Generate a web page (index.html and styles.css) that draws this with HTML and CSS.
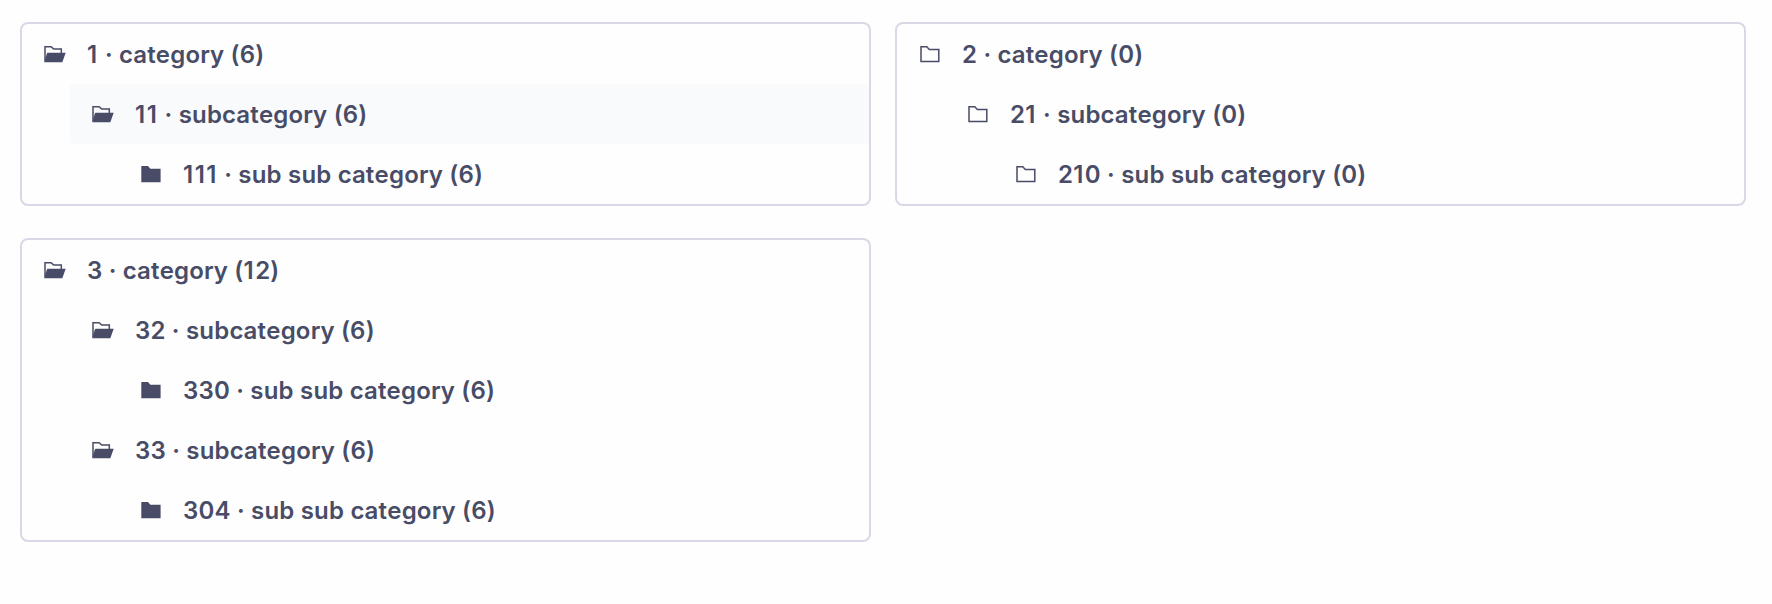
FILE: index.html
```
<!DOCTYPE html>
<html lang="en">
<head>
<meta charset="utf-8">
<title>Categories</title>
<link rel="stylesheet" href="styles.css">
</head>
<body>
<svg class="sprite" aria-hidden="true">
  <symbol id="open" viewBox="0 0 24 24">
    <path d="M3 19.5V4.7H9.1L11.7 7.1H19.3V11" fill="none" stroke="currentColor" stroke-width="1.5"/>
    <path d="M2.3 20.3L4.7 11.9Q5 10.8 6 10.8H23.7L20.3 20.3Z" fill="currentColor"/>
  </symbol>
  <symbol id="full" viewBox="0 0 24 24">
    <path d="M3.3 4H10L12.4 6.7H22.6V20.3H3.3Z" fill="currentColor"/>
  </symbol>
  <symbol id="empty" viewBox="0 0 24 24">
    <path d="M4 4.8H9.8L12.3 7.4H21.8V19.5H4Z" fill="none" stroke="currentColor" stroke-width="1.5"/>
  </symbol>
</svg>
<main class="grid">
  <section class="card">
    <div class="row"><svg class="icon"><use href="#open"/></svg><span><span class="ones">1</span> · category (6)</span></div>
    <div class="row level-2 active"><svg class="icon"><use href="#open"/></svg><span><span class="ones">11</span> · subcategory (6)</span></div>
    <div class="row level-3"><svg class="icon"><use href="#full"/></svg><span><span class="ones">111</span> · sub sub category (6)</span></div>
  </section>
  <section class="card">
    <div class="row"><svg class="icon"><use href="#empty"/></svg><span>2 · category (0)</span></div>
    <div class="row level-2"><svg class="icon"><use href="#empty"/></svg><span>2<span class="ones">1</span> · subcategory (0)</span></div>
    <div class="row level-3"><svg class="icon"><use href="#empty"/></svg><span>2<span class="ones">1</span>0 · sub sub category (0)</span></div>
  </section>
  <section class="card">
    <div class="row"><svg class="icon"><use href="#open"/></svg><span>3 · category (<span class="ones">1</span>2)</span></div>
    <div class="row level-2"><svg class="icon"><use href="#open"/></svg><span>32 · subcategory (6)</span></div>
    <div class="row level-3"><svg class="icon"><use href="#full"/></svg><span>330 · sub sub category (6)</span></div>
    <div class="row level-2"><svg class="icon"><use href="#open"/></svg><span>33 · subcategory (6)</span></div>
    <div class="row level-3"><svg class="icon"><use href="#full"/></svg><span>304 · sub sub category (6)</span></div>
  </section>
</main>
</body>
</html>
```
FILE: styles.css
```
body {
  margin: 0;
  background: #fefefe;
  color: #484c66;
  font-family: Inter, sans-serif;
  font-size: 24px;
  font-weight: 600;
  font-kerning: none;
  letter-spacing: 0.2px;
}

.sprite {
  display: none;
}

.grid {
  display: grid;
  grid-template-columns: 851px 851px;
  gap: 32px 24px;
  align-items: start;
  padding: 22px 20px;
}

.card {
  border: 2px solid #d9d8e6;
  border-radius: 8px;
}

.row {
  display: flex;
  align-items: center;
  gap: 21px;
  height: 60px;
  padding-left: 20px;
  border-radius: 4px;
  white-space: pre;
}

.level-2 {
  margin-left: 48px;
}

.level-3 {
  margin-left: 96px;
}

.active {
  background: #f9fafc;
}

.icon {
  width: 24px;
  height: 24px;
}

.ones {
  letter-spacing: 1.5px;
}
```
